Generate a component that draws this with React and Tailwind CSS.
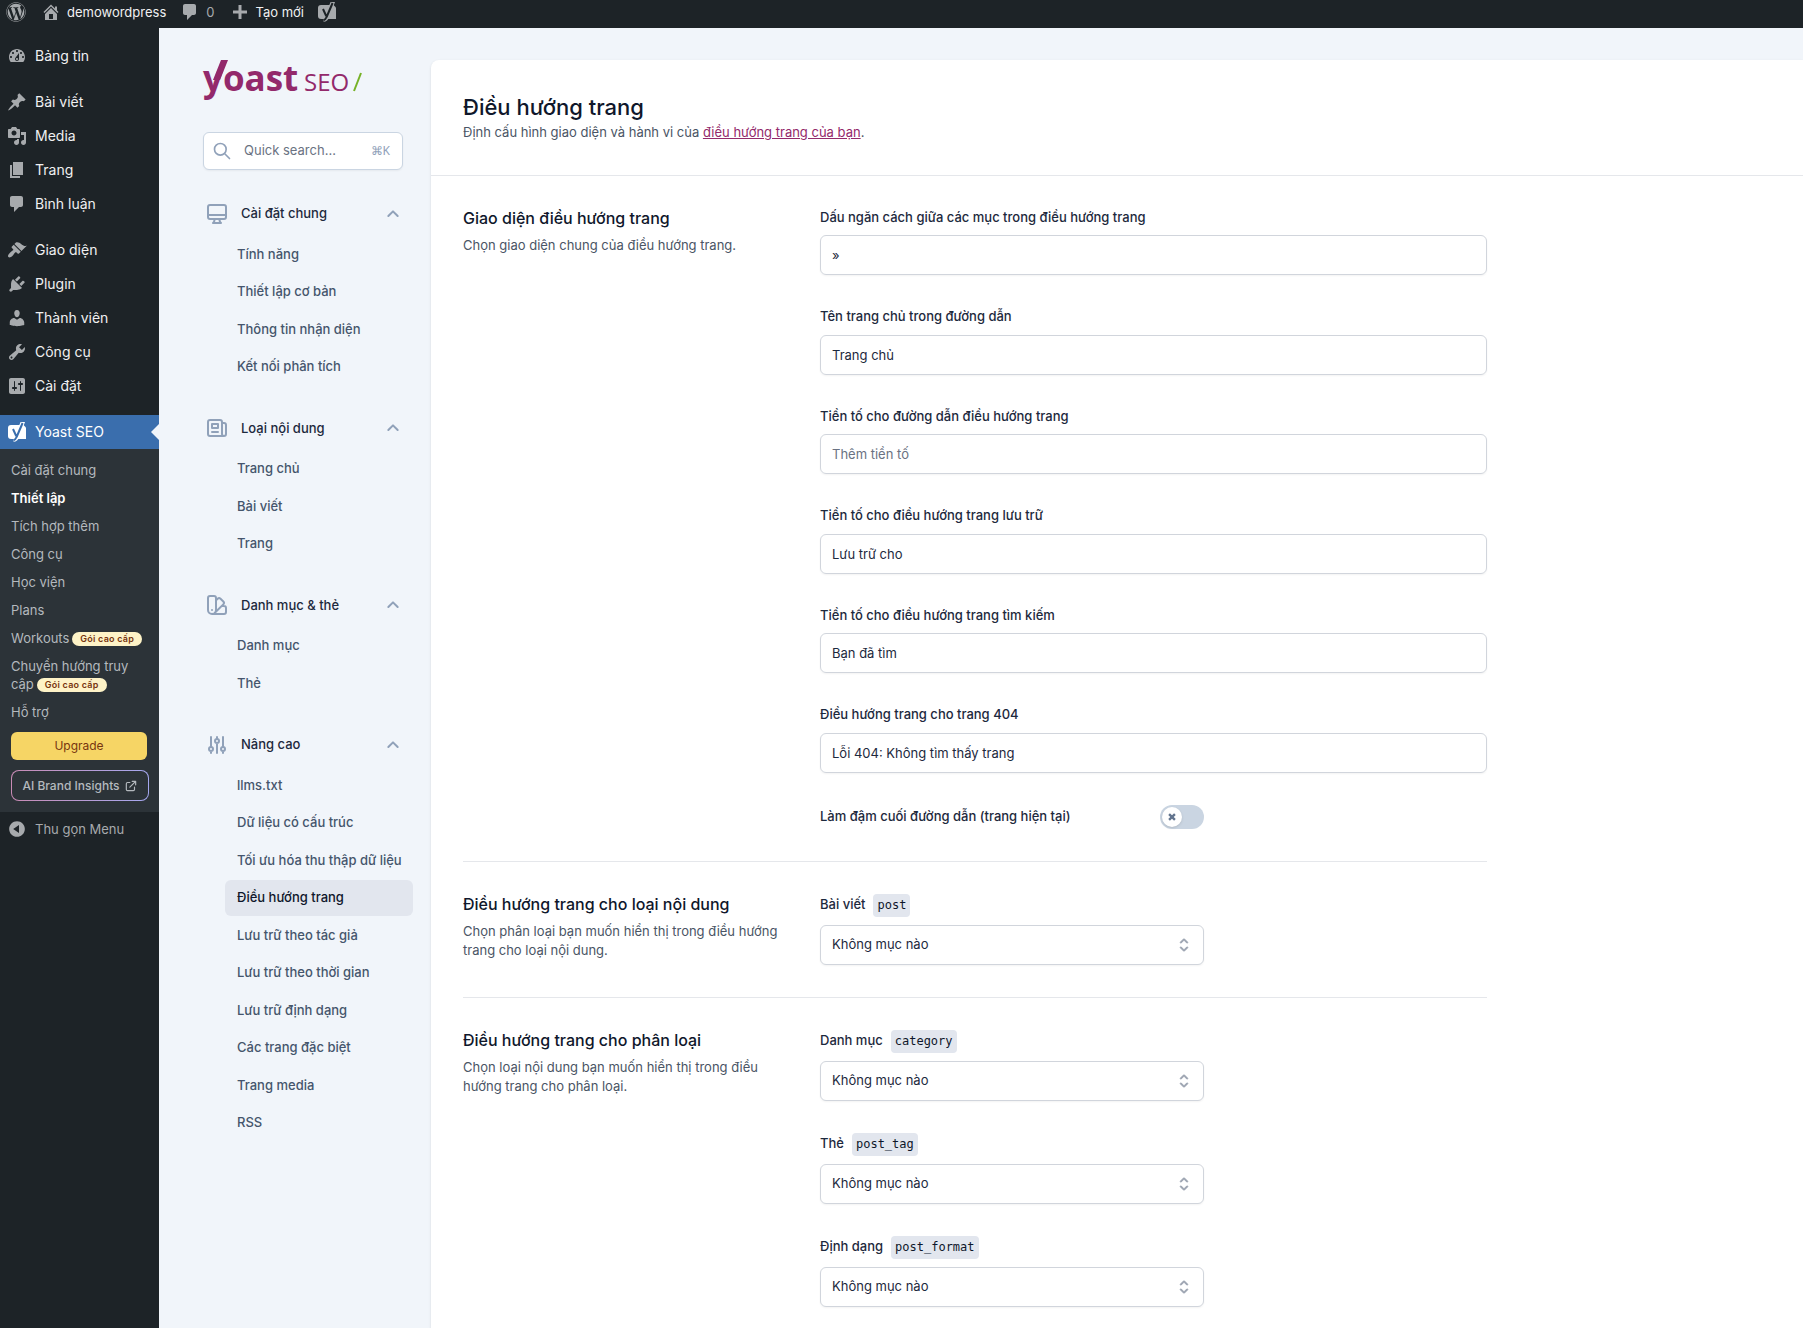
import { useState } from 'react';
import { FaWordpress } from 'react-icons/fa';
import { HiChevronUpDown } from 'react-icons/hi2';
import {
  HiOutlineChevronUp,
  HiOutlineDesktopComputer,
  HiOutlineNewspaper,
  HiOutlineColorSwatch,
  HiOutlineAdjustments,
  HiOutlineSearch,
  HiOutlineExternalLink,
} from 'react-icons/hi';

const ICONS = {
  home: 'M16 8.5l1.53 1.53-1.06 1.06L10 4.6l-6.47 6.49-1.06-1.06L10 2.5l4 4v-2h2v4zm-6-2.46l6 5.99V18H4v-5.97zM12 17v-5H8v5h4z',
  plus: 'M17 8.5v3h-5.5V17h-3v-5.5H3v-3h5.5V3h3v5.5H17z',
  dashboard:
    'M3.76 16h12.48c1.1-1.37 1.76-3.11 1.76-5 0-4.42-3.58-8-8-8s-8 3.58-8 8c0 1.89.66 3.63 1.76 5zM10 4c.55 0 1 .45 1 1s-.45 1-1 1-1-.45-1-1 .45-1 1-1zM6 6c.55 0 1 .45 1 1s-.45 1-1 1-1-.45-1-1 .45-1 1-1zm8 0c.55 0 1 .45 1 1s-.45 1-1 1-1-.45-1-1 .45-1 1-1zm-5.37 5.55L12 7v6c0 1.1-.9 2-2 2s-2-.9-2-2c0-.57.24-1.08.63-1.45zM4 10c.55 0 1 .45 1 1s-.45 1-1 1-1-.45-1-1 .45-1 1-1zm12 0c.55 0 1 .45 1 1s-.45 1-1 1-1-.45-1-1 .45-1 1-1zm-5 3c0-.55-.45-1-1-1s-1 .45-1 1 .45 1 1 1 1-.45 1-1z',
  post: 'M10.44 3.02l1.82-1.82 6.36 6.35-1.83 1.82c-1.05-.68-2.48-.57-3.41.36l-.75.75c-.92.93-1.04 2.35-.35 3.41l-1.83 1.82-2.41-2.41-2.8 2.79c-.42.42-3.38 2.71-3.8 2.29s1.86-3.39 2.28-3.81l2.79-2.79L4.1 9.36l1.83-1.82c1.05.69 2.48.57 3.4-.36l.75-.75c.93-.92 1.05-2.35.36-3.41z',
  media:
    'M13 11V4c0-.55-.45-1-1-1h-1.67L9 1H5L3.67 3H2c-.55 0-1 .45-1 1v7c0 .55.45 1 1 1h10c.55 0 1-.45 1-1zM7 4.5c1.38 0 2.5 1.12 2.5 2.5S8.38 9.5 7 9.5 4.5 8.38 4.5 7 5.62 4.5 7 4.5zM14 6h5v10.5c0 1.38-1.12 2.5-2.5 2.5S14 17.88 14 16.5s1.12-2.5 2.5-2.5c.17 0 .34.02.5.05V9h-3V6zm-4 8.05V13h2v3.5c0 1.38-1.12 2.5-2.5 2.5S7 17.88 7 16.5 8.12 14 9.5 14c.17 0 .34.02.5.05z',
  page: 'M6 15V2h10v13H6zm-1 1h8v2H3V5h2v11z',
  comments: 'M5 2h9c1.1 0 2 .9 2 2v7c0 1.1-.9 2-2 2h-2l-5 5v-5H5c-1.1 0-2-.9-2-2V4c0-1.1.9-2 2-2z',
  appearance:
    'M14.48 11.06L7.41 3.99l1.5-1.5c.5-.56 2.3-.47 3.51.32 1.21.8 1.43 1.28 2.91 2.1 1.18.64 2.45 1.26 4.45.85zm-.71.71L6.7 4.7 4.93 6.47c-.39.39-.39 1.02 0 1.41l1.06 1.06c.39.39.39 1.03 0 1.42-.6.6-1.43 1.11-2.21 1.69-.35.26-.7.53-1.01.84C1.43 14.23.4 16.08 1.4 17.07c.99 1 2.84-.03 4.18-1.36.31-.31.58-.66.85-1.02.57-.78 1.08-1.61 1.69-2.21.39-.39 1.02-.39 1.41 0l1.06 1.06c.39.39 1.02.39 1.41 0z',
  plugins:
    'M13.11 4.36L9.87 7.6 8 5.73l3.24-3.24c.35-.34 1.05-.2 1.56.32.52.51.66 1.21.31 1.55zm-8 1.77l.91-1.12 9.01 9.01-1.19.84c-.71.71-2.63 1.16-3.82 1.16H6.14L4.9 17.26c-.59.59-1.54.59-2.12 0-.59-.58-.59-1.53 0-2.12l1.24-1.24v-3.88c0-1.13.4-3.19 1.09-3.89zm7.26 3.97l3.24-3.24c.34-.35 1.04-.21 1.55.31.52.51.66 1.21.31 1.55l-3.24 3.25z',
  users:
    'M10 9.25c-2.27 0-2.73-3.44-2.73-3.44C7 4.02 7.82 2 9.97 2c2.16 0 2.98 2.02 2.71 3.81 0 0-.41 3.44-2.68 3.44zm0 2.57L12.72 10c2.39 0 4.52 2.33 4.52 4.53v2.49s-3.65 1.13-7.24 1.13c-3.65 0-7.24-1.13-7.24-1.13v-2.49c0-2.25 1.94-4.48 4.47-4.48z',
  tools:
    'M16.68 9.77c-1.34 1.34-3.3 1.67-4.95.99l-5.41 6.52c-.99.99-2.59.99-3.58 0s-.99-2.59 0-3.57l6.52-5.42c-.68-1.65-.35-3.61.99-4.95 1.28-1.28 3.12-1.62 4.72-1.06l-2.89 2.89 2.82 2.82 2.86-2.87c.53 1.58.18 3.39-1.08 4.65zM3.81 16.21c.4.39 1.04.39 1.43 0 .4-.4.4-1.04 0-1.43-.39-.4-1.03-.4-1.43 0-.39.39-.39 1.03 0 1.43z',
  settings:
    'M18 16V4c0-1.1-.9-2-2-2H4c-1.1 0-2 .9-2 2v12c0 1.1.9 2 2 2h12c1.1 0 2-.9 2-2zM8 11h1c.55 0 1 .45 1 1s-.45 1-1 1H8v1.5c0 .28-.22.5-.5.5s-.5-.22-.5-.5V13H6c-.55 0-1-.45-1-1s.45-1 1-1h1V5.5c0-.28.22-.5.5-.5s.5.22.5.5V11zm5-2h-1c-.55 0-1-.45-1-1s.45-1 1-1h1V5.5c0-.28.22-.5.5-.5s.5.22.5.5V7h1c.55 0 1 .45 1 1s-.45 1-1 1h-1v5.5c0 .28-.22.5-.5.5s-.5-.22-.5-.5V9z',
  collapse:
    'M10 2.16c4.33 0 7.84 3.51 7.84 7.84s-3.51 7.84-7.84 7.84S2.16 14.33 2.16 10 5.71 2.16 10 2.16zm2 11.72V6.12L6.18 9.97z',
};

const ADMIN_MENU = [
  [{ icon: 'dashboard', label: 'Bảng tin' }],
  [
    { icon: 'post', label: 'Bài viết' },
    { icon: 'media', label: 'Media' },
    { icon: 'page', label: 'Trang' },
    { icon: 'comments', label: 'Bình luận' },
  ],
  [
    { icon: 'appearance', label: 'Giao diện' },
    { icon: 'plugins', label: 'Plugin' },
    { icon: 'users', label: 'Thành viên' },
    { icon: 'tools', label: 'Công cụ' },
    { icon: 'settings', label: 'Cài đặt' },
  ],
];

const YOAST_SUBMENU = [
  { label: 'Cài đặt chung' },
  { label: 'Thiết lập', current: true },
  { label: 'Tích hợp thêm' },
  { label: 'Công cụ' },
  { label: 'Học viện' },
  { label: 'Plans' },
  { label: 'Workouts', premium: true },
  { label: 'Chuyển hướng truy cập', premium: true },
  { label: 'Hỗ trợ' },
];

const SETTINGS_NAV = [
  {
    title: 'Cài đặt chung',
    Icon: HiOutlineDesktopComputer,
    items: ['Tính năng', 'Thiết lập cơ bản', 'Thông tin nhận diện', 'Kết nối phân tích'],
  },
  {
    title: 'Loại nội dung',
    Icon: HiOutlineNewspaper,
    items: ['Trang chủ', 'Bài viết', 'Trang'],
  },
  {
    title: 'Danh mục & thẻ',
    Icon: HiOutlineColorSwatch,
    items: ['Danh mục', 'Thẻ'],
  },
  {
    title: 'Nâng cao',
    Icon: HiOutlineAdjustments,
    items: [
      'llms.txt',
      'Dữ liệu có cấu trúc',
      'Tối ưu hóa thu thập dữ liệu',
      'Điều hướng trang',
      'Lưu trữ theo tác giả',
      'Lưu trữ theo thời gian',
      'Lưu trữ định dạng',
      'Các trang đặc biệt',
      'Trang media',
      'RSS',
    ],
  },
];

const TEXT_FIELDS = [
  { id: 'separator', label: 'Dấu ngăn cách giữa các mục trong điều hướng trang', value: '»' },
  { id: 'home', label: 'Tên trang chủ trong đường dẫn', value: 'Trang chủ' },
  { id: 'prefix', label: 'Tiền tố cho đường dẫn điều hướng trang', value: '', placeholder: 'Thêm tiền tố' },
  { id: 'archive', label: 'Tiền tố cho điều hướng trang lưu trữ', value: 'Lưu trữ cho' },
  { id: 'search', label: 'Tiền tố cho điều hướng trang tìm kiếm', value: 'Bạn đã tìm' },
  { id: 'notfound', label: 'Điều hướng trang cho trang 404', value: 'Lỗi 404: Không tìm thấy trang' },
];

const TAXONOMIES = [
  { label: 'Danh mục', slug: 'category' },
  { label: 'Thẻ', slug: 'post_tag' },
  { label: 'Định dạng', slug: 'post_format' },
];

const Dashicon = ({ name }) => (
  <svg className="size-5 shrink-0 fill-[#a7aaad]" viewBox="0 0 20 20" aria-hidden="true">
    <path fillRule="evenodd" d={ICONS[name]} />
  </svg>
);

const YoastMark = ({ tone, ink }) => (
  <svg className="h-5 w-[18px] shrink-0" viewBox="0 0 18 20" fill="none" aria-hidden="true">
    <path className={tone} d="M3 3h12.500L18 5.500V17H3a3 3 0 0 1-3-3V6a3 3 0 0 1 3-3z" />
    <path className={tone} d="M12.600 0h4.400l-6 15.400c-.9 2.500-2.600 4.100-5.500 4.400v-3z" />
    <path className={ink} strokeWidth="2" d="M5 7l3.200 7M14.600 1L8.600 15c-.7 1.800-1.600 2.800-3.100 3.200" />
  </svg>
);

const AdminBar = () => (
  <header className="flex h-7 shrink-0 items-center bg-[#1d2327] pb-1 pl-[6px] text-[13px] leading-5 text-[#f0f0f1]">
    <a href="#wp" aria-label="WordPress">
      <FaWordpress className="size-5 text-[#a7aaad]" />
    </a>
    <a href="#site" className="ml-[15px] flex items-center gap-[6px]">
      <Dashicon name="home" />
      demowordpress
    </a>
    <a href="#comments" className="ml-[14px] flex items-center gap-[6px] text-[#a7aaad]">
      <Dashicon name="comments" />0
    </a>
    <a href="#new" className="ml-4 flex items-center gap-[5px]">
      <Dashicon name="plus" />
      Tạo mới
    </a>
    <a href="#yoast" className="ml-[14px]" aria-label="Yoast SEO">
      <YoastMark tone="fill-[#a7aaad]" ink="stroke-[#1d2327]" />
    </a>
  </header>
);

const PremiumBadge = () => (
  <span className="ml-[3px] inline-block rounded-full bg-[#fef3c7] px-2 py-px align-middle text-[9px] leading-3 font-semibold tracking-wide text-[#78350f]">
    Gói cao cấp
  </span>
);

const AdminMenu = () => (
  <nav className="flex w-[159px] shrink-0 flex-col bg-[#1d2327] pt-[11px] text-sm text-[#f0f0f1]" aria-label="WordPress">
    {ADMIN_MENU.map((group) => (
      <ul key={group[0].label} className="mb-3">
        {group.map((item) => (
          <li key={item.label}>
            <a href="#menu" className="flex h-[34px] items-center gap-2 pl-[7px]">
              <Dashicon name={item.icon} />
              {item.label}
            </a>
          </li>
        ))}
      </ul>
    ))}

    <a href="#yoast" className="relative flex h-[34px] items-center gap-[9px] bg-[#3a6ead] pl-2 text-white">
      <YoastMark tone="fill-white" ink="stroke-[#3a6ead]" />
      Yoast SEO
      <span className="absolute right-0 border-y-8 border-r-8 border-y-transparent border-r-[#f1f5fa]" />
    </a>

    <div className="bg-[#2c3338] pt-[7px] pb-[11px] text-[13px] leading-[18px] text-[#b4b9be]">
      <ul>
        {YOAST_SUBMENU.map((item) => (
          <li key={item.label}>
            <a
              href="#submenu"
              className={`block py-[5px] pr-3 pl-[11px] ${item.current ? 'font-semibold text-white' : ''}`}
            >
              {item.label}
              {item.premium && <PremiumBadge />}
            </a>
          </li>
        ))}
      </ul>
      <a
        href="#upgrade"
        className="mt-[6px] mr-3 ml-[11px] flex h-7 items-center justify-center rounded-md bg-[#f6d565] text-xs text-[#78350f]"
      >
        Upgrade
      </a>
      <a
        href="#insights"
        className="mt-[10px] mr-[10px] ml-[11px] block rounded-lg bg-linear-to-r from-[#c98bb5] to-[#a5a8f0] p-px"
      >
        <span className="flex h-[29px] items-center justify-center gap-1 rounded-[7px] bg-[#2c3338] text-xs font-medium">
          AI Brand Insights
          <HiOutlineExternalLink className="size-[14px]" />
        </span>
      </a>
    </div>

    <button type="button" className="flex h-[34px] items-center gap-2 pl-[7px] text-[13px] text-[#a7aaad]">
      <Dashicon name="collapse" />
      Thu gọn Menu
    </button>
  </nav>
);

const YoastLogo = () => (
  <svg className="h-[44px] w-[160px] overflow-visible" viewBox="0 0 160 44" role="img" aria-label="Yoast SEO">
    <text x="0" y="31" fontFamily="'Open Sans', sans-serif" fontSize="35" fontWeight="700" fill="#93296b">
      yoast
    </text>
    <path d="M18 0h7l-8 20h-7z" fill="#93296b" />
    <text x="101" y="31" fontFamily="'Open Sans', sans-serif" fontSize="24" fill="#93296b">
      SEO
    </text>
    <path d="M158 13l-7 18" stroke="#77b227" strokeWidth="2" />
  </svg>
);

const SettingsNav = () => {
  const [closed, setClosed] = useState([]);

  const toggleGroup = (title) => {
    setClosed((prev) => (prev.includes(title) ? prev.filter((t) => t !== title) : [...prev, title]));
  };

  return (
    <aside className="w-[272px] shrink-0 pt-8 pr-[18px] pl-11 text-[13px] leading-normal">
      <YoastLogo />

      {/* Quick search */}
      <button
        type="button"
        className="mt-7 flex h-[38px] w-[200px] items-center rounded-md border border-slate-300 bg-white px-2 text-gray-500 shadow-xs"
      >
        <HiOutlineSearch className="size-5 text-slate-400" />
        <span className="ml-3">Quick search...</span>
        <kbd className="mr-1 ml-auto font-sans text-xs text-slate-400">⌘K</kbd>
      </button>

      {SETTINGS_NAV.map(({ title, Icon, items }) => (
        <section key={title} className="mt-[26px]">
          <button
            type="button"
            onClick={() => toggleGroup(title)}
            aria-expanded={!closed.includes(title)}
            className="flex w-full items-center py-2 pr-3 pl-[2px] font-medium text-slate-800"
          >
            <Icon className="-my-1 size-6 text-slate-400" />
            <span className="ml-3">{title}</span>
            <HiOutlineChevronUp className="ml-auto size-4 text-slate-400 [&_path]:stroke-3" />
          </button>
          {!closed.includes(title) && (
            <ul className="mt-[5px] ml-[22px] flex flex-col gap-[2px]">
              {items.map((item) => (
                <li key={item}>
                  <a
                    href="#section"
                    className={`block rounded-md px-3 py-2 font-medium whitespace-nowrap ${
                      item === 'Điều hướng trang' ? 'bg-[#e2e6ee] text-slate-900' : 'text-slate-600'
                    }`}
                  >
                    {item}
                  </a>
                </li>
              ))}
            </ul>
          )}
        </section>
      ))}
    </aside>
  );
};

const Section = ({ title, description, children }) => (
  <section className="grid max-w-5xl grid-cols-[325px_1fr] gap-8 border-gray-200 py-8 not-last:border-b">
    <div>
      <h2 className="text-base leading-5 font-medium text-slate-900">{title}</h2>
      <p className="mt-2 text-gray-600">{description}</p>
    </div>
    <div className="flex flex-col gap-8">{children}</div>
  </section>
);

const TextField = ({ id, label, value, placeholder }) => (
  <div>
    <label htmlFor={id} className="block font-medium text-slate-800">
      {label}
    </label>
    <input
      id={id}
      type="text"
      defaultValue={value}
      placeholder={placeholder}
      className="mt-2 block h-10 w-full rounded-md border border-gray-300 px-[11px] text-slate-800 shadow-xs placeholder:text-gray-500"
    />
  </div>
);

const SelectField = ({ label, slug }) => (
  <div className="max-w-sm">
    <label htmlFor={slug} className="flex h-[23px] items-center gap-2 font-medium text-slate-800">
      {label}
      <code className="rounded bg-[#e2e6ee] px-1 font-['DejaVu_Sans_Mono',monospace] text-xs leading-[23px] font-normal text-slate-900">
        {slug}
      </code>
    </label>
    <div className="relative mt-2">
      <select
        id={slug}
        className="block h-10 w-full appearance-none rounded-md border border-gray-300 bg-white px-[11px] text-slate-800 shadow-xs"
      >
        <option>Không mục nào</option>
      </select>
      <HiChevronUpDown className="pointer-events-none absolute top-[10px] right-[10px] size-5 text-gray-400 [&_path]:stroke-current [&_path]:stroke-1" />
    </div>
  </div>
);

const ToggleField = ({ label }) => {
  const [checked, setChecked] = useState(false);

  return (
    <div className="flex max-w-sm items-center justify-between">
      <span id="bold-last" className="font-medium text-slate-800">
        {label}
      </span>
      <button
        type="button"
        role="switch"
        aria-checked={checked}
        aria-labelledby="bold-last"
        onClick={() => setChecked(!checked)}
        className={`flex h-6 w-11 items-center rounded-full p-[2px] ${
          checked ? 'justify-end bg-[#a61e69]' : 'bg-slate-300'
        }`}
      >
        <span className="flex size-5 items-center justify-center rounded-full bg-white shadow-sm">
          <svg className="size-[14px] text-slate-500" viewBox="0 0 12 12" fill="none" aria-hidden="true">
            <path d="M3.500 3.500l5 5M8.500 3.500l-5 5" stroke="currentColor" strokeWidth="2" />
          </svg>
        </span>
      </button>
    </div>
  );
};

const App = () => (
  <div className="flex min-h-screen flex-col bg-[#f1f5fa] font-['Inter','Liberation_Sans',sans-serif]">
    <AdminBar />
    <div className="flex grow">
      <AdminMenu />
      <SettingsNav />
      <main className="mt-8 min-w-0 grow rounded-tl-lg bg-white text-[13px] leading-normal shadow-sm">
        <header className="border-b border-gray-200 p-8">
          <h1 className="text-[22px] leading-[31px] font-medium text-slate-900">Điều hướng trang</h1>
          <p className="text-gray-600">
            Định cấu hình giao diện và hành vi của{' '}
            <a href="#breadcrumbs" className="text-[#93296b] underline">
              điều hướng trang của bạn
            </a>
            .
          </p>
        </header>
        <div className="-mb-3 px-8">
          <Section title="Giao diện điều hướng trang" description="Chọn giao diện chung của điều hướng trang.">
            {TEXT_FIELDS.map((field) => (
              <TextField key={field.id} {...field} />
            ))}
            <ToggleField label="Làm đậm cuối đường dẫn (trang hiện tại)" />
          </Section>
          <Section
            title="Điều hướng trang cho loại nội dung"
            description="Chọn phân loại bạn muốn hiển thị trong điều hướng trang cho loại nội dung."
          >
            <SelectField label="Bài viết" slug="post" />
          </Section>
          <Section
            title="Điều hướng trang cho phân loại"
            description="Chọn loại nội dung bạn muốn hiển thị trong điều hướng trang cho phân loại."
          >
            {TAXONOMIES.map((field) => (
              <SelectField key={field.slug} {...field} />
            ))}
          </Section>
        </div>
      </main>
    </div>
  </div>
);

export default App;
